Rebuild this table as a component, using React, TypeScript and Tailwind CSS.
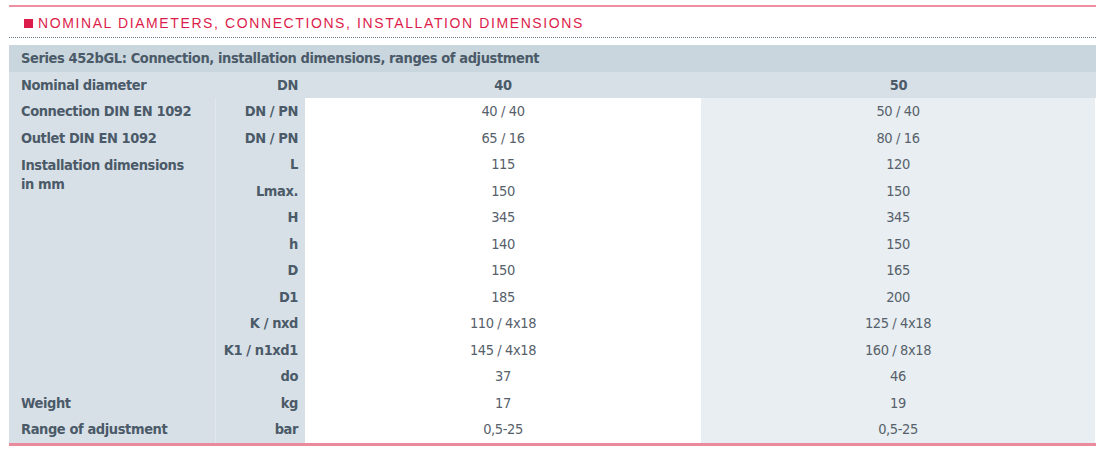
import React from "react";

const COND = { fontFamily: '"Liberation Sans Narrow", "DejaVu Sans Condensed", Roboto, sans-serif' };

type Row = { label?: string; unit: string; a: string; b: string };

const ROWS: Row[] = [
  { label: "Connection DIN EN 1092", unit: "DN / PN", a: "40 / 40", b: "50 / 40" },
  { label: "Outlet DIN EN 1092", unit: "DN / PN", a: "65 / 16", b: "80 / 16" },
  { unit: "L", a: "115", b: "120" },
  { unit: "Lmax.", a: "150", b: "150" },
  { unit: "H", a: "345", b: "345" },
  { unit: "h", a: "140", b: "150" },
  { unit: "D", a: "150", b: "165" },
  { unit: "D1", a: "185", b: "200" },
  { unit: "K / nxd", a: "110 / 4x18", b: "125 / 4x18" },
  { unit: "K1 / n1xd1", a: "145 / 4x18", b: "160 / 8x18" },
  { unit: "do", a: "37", b: "46" },
  { label: "Weight", unit: "kg", a: "17", b: "19" },
  { label: "Range of adjustment", unit: "bar", a: "0,5-25", b: "0,5-25" }
];

export default function App() {
  return (
    <div className="h-[453px] w-[1102px] bg-white pt-[5px]">
      <div className="ml-[9px] w-[1087px]">
        <div className="h-[2px] bg-[#ef8fa2]" />
        <div className="flex h-[30px] items-center gap-[5px] pl-[15px] pt-[2px]">
          <span className="h-[9px] w-[9px] bg-[#dc1d4c]" />
          <span
            className="text-[14px] uppercase tracking-[1.6px] text-[#dc1d4c]"
            style={{ fontFamily: '"Liberation Sans", Arial, sans-serif' }}
          >
            Nominal diameters, connections, installation dimensions
          </span>
        </div>
        <div className="border-t border-dotted border-[#6b7986]" />
        <div className="h-[7px]" />

        <div style={COND} className="text-[14.5px] leading-none tracking-[-0.4px]">
          <div className="flex h-[26.5px] items-center bg-[#c9d6de] pl-[12px] font-bold text-[#4b5a68]">
            Series 452bGL: Connection, installation dimensions, ranges of adjustment
          </div>
          <div className="flex h-[26.5px] items-center bg-[#d8e0e7] font-bold text-[#4b5a68]">
            <div className="w-[206px] pl-[12px]">Nominal diameter</div>
            <div className="w-[90px] pr-[7px] text-right">DN</div>
            <div className="w-[396px] text-center">40</div>
            <div className="flex-1 text-center">50</div>
          </div>
          <div className="grid grid-cols-[206px_90px_396px_395px] auto-rows-[26.5px]">
            {ROWS.map((r, i) => {
              const isInstall = i === 2;
              const inGroup = i > 2 && i < 11;
              return (
                <React.Fragment key={r.unit + i}>
                  {!inGroup && (
                    <div
                      className={
                        "bg-[#d8e0e7] pl-[12px] font-bold text-[#4b5a68] " +
                        (isInstall ? "row-span-9 pt-[5px] leading-[19px]" : "flex items-center")
                      }
                    >
                      {isInstall ? (
                        <>
                          Installation dimensions
                          <br />
                          in mm
                        </>
                      ) : (
                        r.label
                      )}
                    </div>
                  )}
                  <div className="flex items-center justify-end border-l border-[#e1e7ec] bg-[#d8e0e7] pr-[7px] font-bold text-[#4b5a68]">
                    {r.unit}
                  </div>
                  <div className="flex items-center justify-center bg-white text-[#57616b]">{r.a}</div>
                  <div className="flex items-center justify-center border-r border-white bg-[#e8eef1] text-[#57616b]">
                    {r.b}
                  </div>
                </React.Fragment>
              );
            })}
          </div>
        </div>
        <div className="h-[3px] bg-[#ec8a9d]" />
      </div>
    </div>
  );
}
